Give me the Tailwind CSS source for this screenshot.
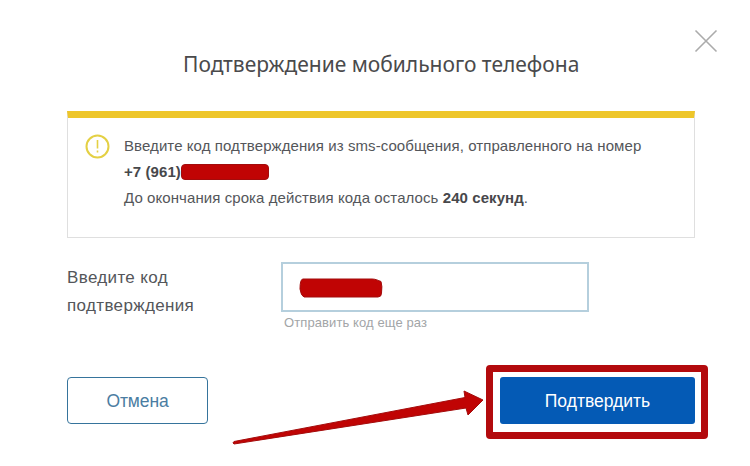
<!DOCTYPE html>
<html lang="ru">
<head>
<meta charset="utf-8">
<title>Подтверждение мобильного телефона</title>
<script src="https://cdn.jsdelivr.net/npm/@tailwindcss/browser@4"></script>
</head>
<body class="bg-white overflow-hidden">
<main class="relative w-[750px] h-[466px] pl-[67px] pr-[55px] pt-[49px] flex flex-col font-['Liberation_Sans',Arial,sans-serif] text-[#54565a]">
  <button aria-label="Закрыть" class="absolute left-[694px] top-[29px]">
    <svg class="block" width="24" height="24" viewBox="0 0 24 24" fill="none" stroke="#ababab" stroke-width="1.6"><path d="M1.5 1.5 22.5 22.5M22.5 1.5 1.5 22.5"/></svg>
  </button>
  <h1 class="ml-[116px] h-[30px] leading-[30px] text-[21px] tracking-[-0.01px] whitespace-nowrap text-[#4a4a4c] font-['Noto_Sans',sans-serif]">Подтверждение мобильного телефона</h1>

  <section class="mt-[32px] h-[127px] border border-[#dfdfdf] border-t-[7px] border-t-[#eec62a] flex pl-[17px] pt-[15px]">
    <svg class="block shrink-0 mt-[1px]" width="25" height="25" viewBox="0 0 25 25" fill="none" stroke="#e4d044"><circle cx="12.5" cy="12.5" r="11" stroke-width="2"/><path d="M12.5 6v8.5M12.5 16.5v2" stroke-width="1.6"/></svg>
    <div class="ml-[14px] text-[15px] leading-[26px] tracking-[0.08px] whitespace-nowrap">
      <p>Введите код подтверждения из sms-сообщения, отправленного на номер</p>
      <p class="flex items-center font-bold text-[#47484b]">+7 (961)<span class="block w-[88px] h-[16px] bg-[#c00404] border border-[#a30c0c] rounded-[4px]"></span></p>
      <p>До окончания срока действия кода осталось <b class="text-[#47484b]">240 секунд</b>.</p>
    </div>
  </section>

  <div class="mt-[23px] flex h-[69px]">
    <label class="w-[214px] pt-[3px] text-[17px] leading-[28px] tracking-[0.35px]">Введите код<br>подтверждения</label>
    <div>
      <div class="w-[308px] h-[50px] mt-[1px] border-2 border-[#b5cfdd] pl-[16px] pt-[14px]">
        <svg class="block" width="85" height="20" viewBox="0 0 85 20"><path d="M4 1H73C77 1 79 2.5 82 3.5Q83.5 8 82.5 15Q82.5 19 79 19H5Q2 18 1 11Q1 1 4 1Z" fill="#c00404" stroke="#a30c0c"/></svg>
      </div>
      <p class="ml-[3px] mt-[3px] text-[13px] leading-[16px] tracking-[0.1px] text-[#a2a5a7] whitespace-nowrap">Отправить код еще раз</p>
    </div>
  </div>

  <div class="-mr-[13px] mt-[35px] flex items-start justify-between">
    <button class="mt-[12px] w-[141px] h-[47px] pt-[2px] border border-[#36749c] rounded-[4px] text-[17.5px] text-[#4b7da2] tracking-[-0.1px]">Отмена</button>
    <div class="w-[222px] h-[74px] border-[7px] border-[#b30a0d] rounded-[4px] pt-[5px] pl-[7px]">
      <button class="w-[195px] h-[47px] pt-[2px] rounded-[3px] bg-[#045ab5] text-white text-[17.5px]">Подтвердить</button>
    </div>
  </div>
  <svg class="absolute left-[230px] top-[385px] pointer-events-none" width="256" height="64" viewBox="0 0 256 64"><path d="M4 56.5 235 12.5 234 6 253 15 238 30 236 23 4 59Q2 58 4 56.5Z" fill="#c00404" stroke="#a30c0c" stroke-linejoin="round"/></svg>
</main>
</body>
</html>
